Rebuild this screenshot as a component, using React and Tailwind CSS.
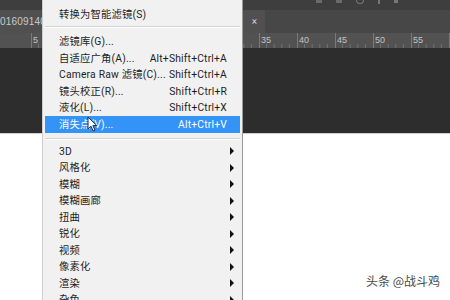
const font = { fontFamily: 'Roboto, "Noto Sans CJK SC", sans-serif' }

const topItems = [
  { label: '滤镜库(G)...' },
  { label: '自适应广角(A)...', key: 'Alt+Shift+Ctrl+A' },
  { label: 'Camera Raw 滤镜(C)...', key: 'Shift+Ctrl+A' },
  { label: '镜头校正(R)...', key: 'Shift+Ctrl+R' },
  { label: '液化(L)...', key: 'Shift+Ctrl+X' },
]

const subMenus = ['3D', '风格化', '模糊', '模糊画廊', '扭曲', '锐化', '视频', '像素化', '渲染', '杂色']

function Ruler() {
  const majors = [31, 69, 107, 145, 183, 221, 259, 297, 335, 373, 411, 449]
  const labels = { 31: '5', 259: '35', 297: '40', 335: '45', 373: '50', 411: '55' }
  const minors = []
  majors.forEach((m) => {
    for (let i = 1; i < 5; i++) minors.push(m + i * 7.6)
  })
  return (
    <svg width="450" height="15" className="block">
      <rect width="450" height="15" fill="#525252" />
      {majors.map((x) => (
        <line key={x} x1={x + 0.5} y1="0" x2={x + 0.5} y2="15" stroke="#7a7a7a" />
      ))}
      {minors.map((x, i) => (
        <line key={i} x1={x} y1="11" x2={x} y2="15" stroke="#737373" />
      ))}
      {Object.entries(labels).map(([x, t]) => (
        <text key={x} x={Number(x) + 2} y="10" fontSize="9" fill="#c4c4c4" fontFamily="Liberation Sans, sans-serif">
          {t}
        </text>
      ))}
    </svg>
  )
}

function Cursor() {
  return (
    <svg width="11" height="16" viewBox="0 0 11 16" className="absolute left-[87px] top-[116px]">
      <path d="M1 1 L1 13 L4 10.2 L6.2 15 L8 14.2 L5.9 9.6 L9.8 9.6 Z" fill="#fff" stroke="#1c2a44" strokeWidth="1" strokeLinejoin="round" />
    </svg>
  )
}

function Arrow() {
  return <span className="-mr-[7px] w-0 h-0 border-y-[4px] border-y-transparent border-l-[4px] border-l-[#111]" />
}

function Item({ label, right, active }) {
  return (
    <div
      className={`h-[16.5px] mx-[2px] flex items-center justify-between pl-[14px] pr-[13px] text-[10.3px] tracking-[0.2px] ${
        active ? 'bg-[#3393f7] text-white' : 'text-[#1e1e1e]'
      }`}
    >
      <span className="whitespace-nowrap">{label}</span>
      {right}
    </div>
  )
}

export default function App() {
  return (
    <div className="relative w-[450px] h-[300px] overflow-hidden bg-white" style={font}>
      {/* photoshop workspace behind the menu */}
      <div className="flex flex-col">
        <div className="h-[10px] bg-[#3e3e3e] flex items-start gap-[14px] pl-[316px]">
          <span className="w-[6px] h-[3px] bg-[#6a6a6a]" />
          <span className="w-[6px] h-[3px] bg-[#6a6a6a]" />
          <span className="w-[8px] h-[4px] rounded-b-full border border-t-0 border-[#777]" />
          <span className="w-[2px] h-[4px] bg-[#777]" />
          <span className="w-[4px] h-[3px] bg-[#777]" />
        </div>
        <div className="h-[23px] flex">
          <div className="w-[265px] bg-[#505050] flex items-center justify-between pr-[8px]">
            <span className="text-[10px] text-[#c9c9c9] tracking-[0.2px]" style={{ fontFamily: '"Liberation Sans", sans-serif' }}>
              01609140
            </span>
            <span className="text-[10px] text-[#cfcfcf] leading-none">×</span>
          </div>
          <div className="flex-1 bg-[#474747]" />
        </div>
        <Ruler />
        <div className="h-[86px] bg-[#2d2d2d] border-b border-[#cfcfcf]" />
      </div>

      {/* filter menu */}
      <div className="absolute left-[42px] top-0 w-[201px] h-[300px] bg-[#f1f1f1] border-l border-[#cdcdcd] border-r border-r-[#9a9a9a] pt-[6px]">
        <Item label="转换为智能滤镜(S)" />
        <div className="mt-[3px] mb-[6px] mx-[2px] border-t border-[#d4d4d4] border-b border-b-white" />
        {topItems.map((it) => (
          <Item
            key={it.label}
            label={it.label}
            right={it.key && <span className="whitespace-nowrap">{it.key}</span>}
          />
        ))}
        <Item label="消失点(V)..." active right={<span>Alt+Ctrl+V</span>} />
        <div className="mt-[5px] mb-[3.5px] mx-[2px] border-t border-[#d4d4d4] border-b border-b-white" />
        {subMenus.map((s) => (
          <Item key={s} label={s} right={<Arrow />} />
        ))}
      </div>

      <Cursor />

      <div className="absolute right-[10px] bottom-[10px] text-[12px] text-[#4a4a4a]" style={{ fontFamily: '"Noto Sans CJK SC", sans-serif' }}>
        头条 @战斗鸡
      </div>
    </div>
  )
}
